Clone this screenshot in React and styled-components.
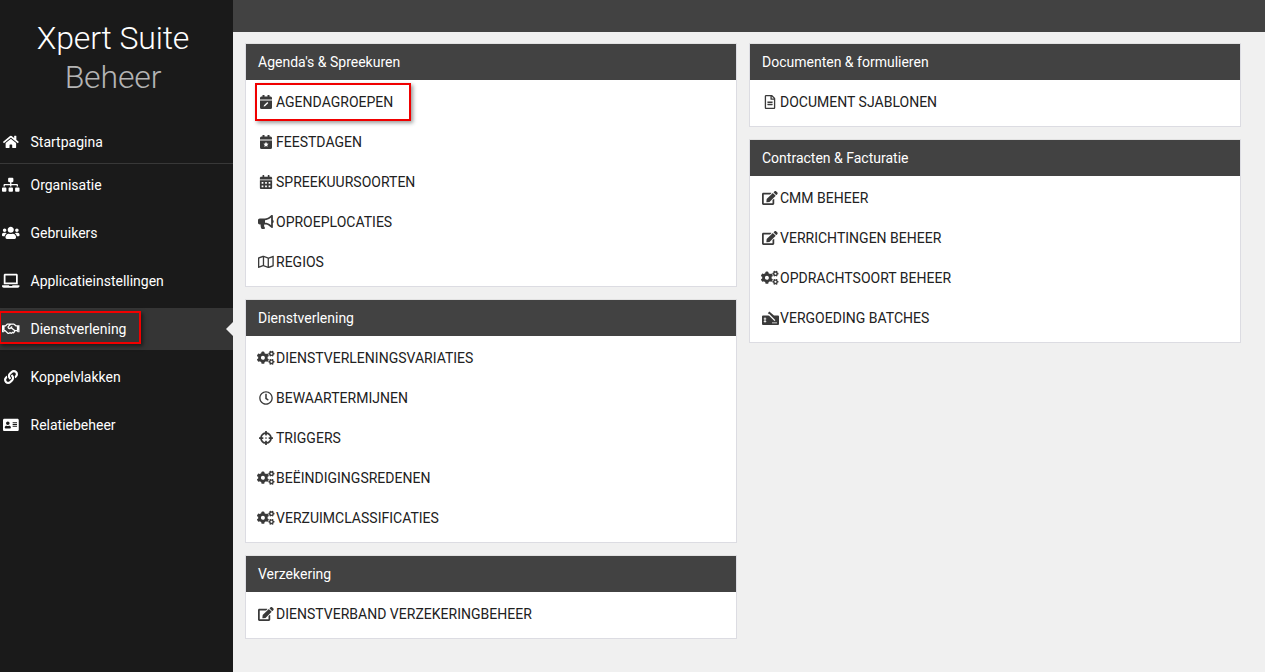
import styled, { createGlobalStyle } from "styled-components";
import {
  FaHome,
  FaSitemap,
  FaUsers,
  FaLaptop,
  FaRegHandshake,
  FaLink,
  FaAddressCard,
  FaBullhorn,
  FaRegMap,
  FaCogs,
  FaRegClock,
  FaCrosshairs,
  FaEdit,
  FaRegFileAlt,
  FaCalendarAlt,
} from "react-icons/fa";

const GlobalStyle = createGlobalStyle`
  html, body {
    margin: 0;
    padding: 0;
    height: 100%;
    overflow: hidden;
    background: #f0f0f0;
    font-family: "Roboto", "Liberation Sans", sans-serif;
  }
`;

const calendarBody =
  "M2.500 0h2v1.500h3V0h2v1.500h1A1.500 1.500 0 0 1 12 3v1.500H0V3a1.500 1.500 0 0 1 1.500-1.500h1zM0 5.500h12v7A1.500 1.500 0 0 1 10.500 14h-9A1.500 1.500 0 0 1 0 12.500z";

const CalendarEdit = () => (
  <svg viewBox="0 0 12 14" width="1em" height="1em">
    <path fill="currentColor" d={calendarBody} />
    <path fill="#fff" d="M7.300 6.900l1 1-3.300 3.300-1.400.4.400-1.400z" />
  </svg>
);

const CalendarStar = () => (
  <svg viewBox="0 0 12 14" width="1em" height="1em">
    <path fill="currentColor" d={calendarBody} />
    <path fill="#fff" d="M6 6.800l.8 1.600 1.800.25-1.300 1.250.3 1.800L6 11.050l-1.600.850.300-1.800-1.300-1.250 1.800-.25z" />
  </svg>
);

const BatchTicket = () => (
  <svg viewBox="0 0 17 14" width="17" height="14">
    <path fill="currentColor" d="M0 5.500A1 1 0 0 1 1 4.500h7L5.800 2.200 7.300.6 12 4.500h4a1 1 0 0 1 1 1V13a1 1 0 0 1-1 1H1a1 1 0 0 1-1-1z" />
    <path fill="#fff" d="M6.800 2.600l6.600 6.600-.9.900-6.600-6.600zM2.500 6.500h1v5h-1zM1.700 7.500h2.600v.8H1.700zM1.700 10h2.600v.8H1.700zM10 11.500h5v.8h-5z" />
  </svg>
);

// font awesome glyphs are 14px tall here, so the box follows the glyph's width
const WIDE = 17.5;
const MEDIUM = 15.75;
const SQUARE = 14;

const navItems = [
  { label: "Startpagina", Icon: FaHome, size: MEDIUM, divider: true },
  { label: "Organisatie", Icon: FaSitemap, size: WIDE },
  { label: "Gebruikers", Icon: FaUsers, size: WIDE },
  { label: "Applicatieinstellingen", Icon: FaLaptop, size: WIDE },
  { label: "Dienstverlening", Icon: FaRegHandshake, size: WIDE, active: true },
  { label: "Koppelvlakken", Icon: FaLink, size: SQUARE },
  { label: "Relatiebeheer", Icon: FaAddressCard, size: MEDIUM },
];

const leftPanels = [
  {
    title: "Agenda's & Spreekuren",
    items: [
      { label: "AGENDAGROEPEN", Icon: CalendarEdit, size: SQUARE, marked: true },
      { label: "FEESTDAGEN", Icon: CalendarStar, size: SQUARE },
      { label: "SPREEKUURSOORTEN", Icon: FaCalendarAlt, size: SQUARE },
      { label: "OPROEPLOCATIES", Icon: FaBullhorn, size: MEDIUM },
      { label: "REGIOS", Icon: FaRegMap, size: MEDIUM },
    ],
  },
  {
    title: "Dienstverlening",
    items: [
      { label: "DIENSTVERLENINGSVARIATIES", Icon: FaCogs, size: WIDE },
      { label: "BEWAARTERMIJNEN", Icon: FaRegClock, size: SQUARE },
      { label: "TRIGGERS", Icon: FaCrosshairs, size: SQUARE },
      { label: "BEËINDIGINGSREDENEN", Icon: FaCogs, size: WIDE },
      { label: "VERZUIMCLASSIFICATIES", Icon: FaCogs, size: WIDE },
    ],
  },
  {
    title: "Verzekering",
    items: [{ label: "DIENSTVERBAND VERZEKERINGBEHEER", Icon: FaEdit, size: MEDIUM }],
  },
];

const rightPanels = [
  {
    title: "Documenten & formulieren",
    items: [{ label: "DOCUMENT SJABLONEN", Icon: FaRegFileAlt, size: SQUARE }],
  },
  {
    title: "Contracten & Facturatie",
    items: [
      { label: "CMM BEHEER", Icon: FaEdit, size: MEDIUM },
      { label: "VERRICHTINGEN BEHEER", Icon: FaEdit, size: MEDIUM },
      { label: "OPDRACHTSOORT BEHEER", Icon: FaCogs, size: WIDE },
      { label: "VERGOEDING BATCHES", Icon: BatchTicket, size: SQUARE },
    ],
  },
];

const PanelList = ({ panels }) => (
  <Column>
    {panels.map((panel) => (
      <Panel key={panel.title}>
        <PanelHead>{panel.title}</PanelHead>
        <PanelBody>
          {panel.items.map(({ label, Icon, size, marked }) => (
            <PanelItem key={label}>
              <ItemIcon $size={size}>
                <Icon />
              </ItemIcon>
              {label}
              {marked && <ItemMark />}
            </PanelItem>
          ))}
        </PanelBody>
      </Panel>
    ))}
  </Column>
);

const App = () => {
  return (
    <Page>
      <GlobalStyle />
      <Sidebar>
        <Brand>
          <BrandName>Xpert Suite</BrandName>
          <BrandSub>Beheer</BrandSub>
        </Brand>
        <Nav>
          {navItems.map(({ label, Icon, size, divider, active }) => (
            <NavItem key={label} $divider={divider} $active={active}>
              <NavIcon $size={size}>
                <Icon />
              </NavIcon>
              {label}
              {active && <NavMark />}
            </NavItem>
          ))}
        </Nav>
      </Sidebar>
      <Main>
        <TopBar />
        <Content>
          <PanelList panels={leftPanels} />
          <PanelList panels={rightPanels} />
        </Content>
      </Main>
    </Page>
  );
};

const Page = styled.div`
  display: flex;
  width: 100%;
  height: 100vh;
  overflow: hidden;
`;

const Sidebar = styled.aside`
  flex: 0 0 233px;
  background: #1a1a1a;
  color: #fff;
`;

const Brand = styled.div`
  display: flex;
  flex-direction: column;
  align-items: center;
  width: 226px;
  height: 121px;
  padding-top: 18px;
  box-sizing: border-box;
  font-weight: 300;
  font-size: 32px;
  line-height: 40px;
  letter-spacing: -0.15px;
`;

const BrandName = styled.div`
  color: #fff;
`;

const BrandSub = styled.div`
  margin-top: -1px;
  color: #b4b4b4;
`;

const Nav = styled.nav`
  display: flex;
  flex-direction: column;
  gap: 6px;
`;

const NavItem = styled.div`
  position: relative;
  display: flex;
  align-items: center;
  height: 42px;
  font-size: 14px;
  font-weight: 400;
  color: #ffffff;
  background: ${(p) => (p.$active ? "#353535" : "transparent")};
  ${(p) =>
    p.$divider &&
    `
    margin-bottom: -6px;
    height: 43px;
    padding-bottom: 1px;
    box-sizing: border-box;
    border-bottom: 1px solid #383838;
  `}
  &::after {
    content: "";
    display: ${(p) => (p.$active ? "block" : "none")};
    position: absolute;
    right: 0;
    top: 14px;
    border-style: solid;
    border-width: 7px 7px 7px 0;
    border-color: transparent #f0f0f0 transparent transparent;
  }
`;

const NavIcon = styled.span`
  display: flex;
  justify-content: center;
  width: 18px;
  margin: 0 10.5px 0 2px;
  font-size: ${(p) => p.$size}px;

  svg {
    flex: none;
  }
`;

const NavMark = styled.span`
  position: absolute;
  left: -1px;
  top: 3px;
  width: 138px;
  height: 29px;
  border: 2px solid #f00000;
  box-shadow: 2px 2px 4px rgba(0, 0, 0, 0.5);
`;

const Main = styled.main`
  flex: 1;
  min-width: 0;
  display: flex;
  flex-direction: column;
`;

const TopBar = styled.div`
  height: 32px;
  background: #424242;
`;

const Content = styled.div`
  display: grid;
  grid-template-columns: 492px 492px;
  gap: 12px;
  padding: 11px 12px;
  align-items: start;
`;

const Column = styled.div`
  display: flex;
  flex-direction: column;
  gap: 12px;
`;

const Panel = styled.section`
  background: #fff;
  border: 1px solid #dcdce2;
  border-top-color: #e2e2e2;
`;

const PanelHead = styled.div`
  display: flex;
  align-items: center;
  height: 36px;
  padding-left: 12px;
  background: #424242;
  color: #fff;
  font-size: 14px;
`;

const PanelBody = styled.div`
  padding: 2px 0 4px;
`;

const PanelItem = styled.div`
  position: relative;
  display: flex;
  align-items: center;
  height: 40px;
  padding-left: 12px;
  color: #212121;
  font-size: 14px;
  letter-spacing: 0.01px;
`;

const ItemIcon = styled.span`
  display: flex;
  justify-content: center;
  width: 16px;
  margin-right: 2px;
  font-size: ${(p) => p.$size}px;
  color: #3a3a3a;

  svg {
    flex: none;
  }
`;

const ItemMark = styled.span`
  position: absolute;
  left: 9px;
  top: 1px;
  width: 152px;
  height: 34px;
  border: 2px solid #f00000;
  box-shadow: 2px 2px 4px rgba(0, 0, 0, 0.4);
`;

export default App;
